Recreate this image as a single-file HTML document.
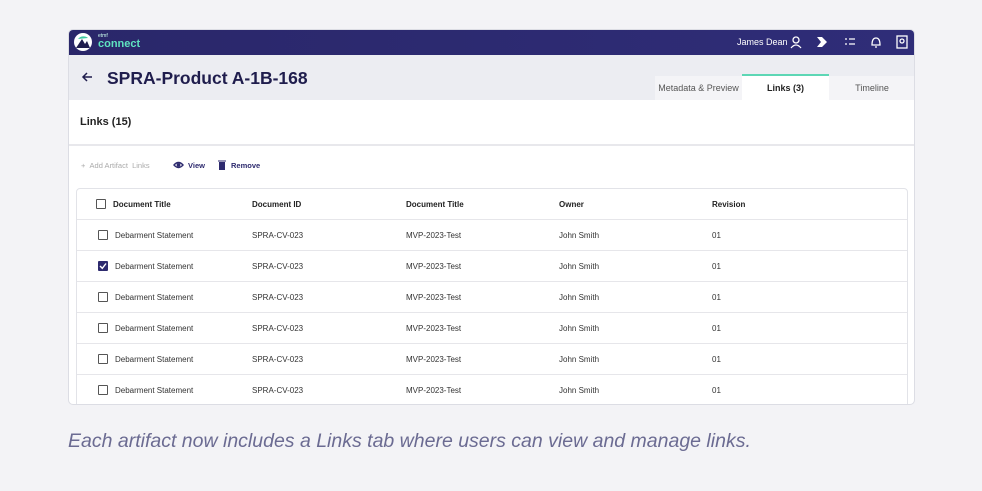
<!DOCTYPE html>
<html><head><style>
body{margin:0;width:982px;height:491px;background:#f3f3f6;font-family:"Liberation Sans",sans-serif;position:relative;overflow:hidden}
.card{position:absolute;left:68px;top:29px;width:845px;height:374px;background:#fff;border:1px solid #dcdde4;border-radius:5px;overflow:hidden}
.nav{position:absolute;left:0;top:0;width:846px;height:25px;background:linear-gradient(90deg,#2a276a,#2f2d78)}
.band{position:absolute;left:0;top:25px;width:846px;height:45px;background:#ecedf2}
.title{position:absolute;left:38px;top:38px;font-size:17.5px;font-weight:bold;color:#1f1d4d}
.tab{position:absolute;top:46px;height:24px;font-size:9px;color:#555;text-align:center;line-height:24px;background:#f4f4f7}
.t{position:absolute;font-size:8px;color:#333}
.h{font-weight:bold;color:#222}
.cb{position:absolute;width:8px;height:8px;border:1.3px solid #555;border-radius:1px}
.line{position:absolute;left:8px;width:830px;height:1px;background:#e6e6ea}
</style></head><body>
<div class="card">
<div class="nav">
<svg style="position:absolute;left:5px;top:3px" width="18" height="18"><circle cx="9" cy="9" r="9" fill="#fff"/><path d="M2 15 L8 6 L11 11 L13 8 L16 15Z" fill="#1f1d4d"/><path d="M4 6 A7 7 0 0 1 14 5" fill="#3fc9a0"/></svg>
<div style="position:absolute;left:29px;top:3px;font-size:5px;color:#cfe">etmf</div>
<div style="position:absolute;left:29px;top:8px;font-size:11px;color:#5fe3c0;font-weight:bold">connect</div>
<div style="position:absolute;left:668px;top:7px;font-size:9px;color:#fff">James Dean</div>
<svg style="position:absolute;left:720px;top:5px" width="14" height="14" fill="none" stroke="#fff" stroke-width="1.3"><circle cx="7" cy="5" r="3"/><path d="M2 13 Q7 7 12 13"/></svg>
<svg style="position:absolute;left:747px;top:6px" width="12" height="12" fill="#fff"><path d="M1 1 L6 1 L11 6 L6 11 L1 11 L5 6Z"/></svg>
<svg style="position:absolute;left:774px;top:6px" width="16" height="12" stroke="#fff" stroke-width="1.3"><path d="M2 3h2M6 3h6M2 8h2M6 8h6"/></svg>
<svg style="position:absolute;left:800px;top:5px" width="14" height="14" fill="none" stroke="#fff" stroke-width="1.3"><path d="M3 10 Q3 3 7 3 Q11 3 11 10Z M6 12h2"/></svg>
<svg style="position:absolute;left:826px;top:4px" width="14" height="16" fill="none" stroke="#fff" stroke-width="1.3"><rect x="2" y="2" width="10" height="12"/><circle cx="7" cy="7" r="2"/></svg>
</div>
<div class="band"></div>
<svg style="position:absolute;left:12px;top:41px" width="12" height="12" fill="none" stroke="#1f1d4d" stroke-width="1.5"><path d="M11 6H2M6 2L2 6L6 10"/></svg>
<div class="title">SPRA-Product A-1B-168</div>
<div class="tab" style="left:586px;width:87px">Metadata &amp; Preview</div>
<div class="tab" style="left:673px;width:87px;background:#fff;color:#222;font-weight:bold;border-top:2px solid #5dd7b5;top:44px">Links (3)</div>
<div class="tab" style="left:760px;width:86px">Timeline</div>
<div style="position:absolute;left:11px;top:86px;font-size:11px;font-weight:bold;color:#222">Links (15)</div>
<div style="position:absolute;left:0;top:114px;width:846px;height:2px;background:#e8e8ec"></div>
<div style="position:absolute;left:12px;top:131px;font-size:7.5px;color:#aaa">+&nbsp;&nbsp;Add Artifact&nbsp; Links</div>
<svg style="position:absolute;left:104px;top:131px" width="11" height="8" fill="none" stroke="#2d2a6e" stroke-width="1.4"><path d="M1 4 Q5.5 -1 10 4 Q5.5 9 1 4Z"/><circle cx="5.5" cy="4" r="1.2" fill="#2d2a6e"/></svg>
<div style="position:absolute;left:119px;top:131px;font-size:7.5px;color:#2d2a6e;font-weight:bold">View</div>
<svg style="position:absolute;left:149px;top:130px" width="8" height="10" fill="#2d2a6e"><rect x="1" y="2" width="6" height="8"/><rect x="0" y="0.5" width="8" height="1"/></svg>
<div style="position:absolute;left:162px;top:131px;font-size:7.5px;color:#2d2a6e;font-weight:bold">Remove</div>
<div style="position:absolute;left:7px;top:158px;width:830px;height:220px;border:1px solid #e2e3e8;border-radius:4px"></div>
<div class="cb" style="left:27px;top:169px"></div>
<div class="t h" style="left:44px;top:170px">Document Title</div>
<div class="t h" style="left:183px;top:170px">Document ID</div>
<div class="t h" style="left:337px;top:170px">Document Title</div>
<div class="t h" style="left:490px;top:170px">Owner</div>
<div class="t h" style="left:643px;top:170px">Revision</div>
<div class="line" style="top:189px"></div><div class="line" style="top:220px"></div><div class="line" style="top:251px"></div><div class="line" style="top:282px"></div><div class="line" style="top:313px"></div><div class="line" style="top:344px"></div>
<div id="rows"></div>
</div>
<div style="position:absolute;left:68px;top:430px;font-size:19.5px;font-style:italic;color:#6b6b92">Each artifact now includes a Links tab where users can view and manage links.</div>
<script>
var h='';for(var i=0;i<6;i++){var y=201+31*i;var c=i==1?'background:#2d2a6e;border-color:#2d2a6e':'';
h+='<div class="cb" style="left:29px;top:'+(y-1)+'px;'+c+'">'+(i==1?'<svg width="8" height="8" style="position:absolute;left:0;top:0" fill="none" stroke="#fff" stroke-width="1.4"><path d="M1 4L3.3 6.3L7 1.5"/></svg>':'')+'</div>';
h+='<div class="t" style="left:46px;top:'+y+'px">Debarment Statement</div><div class="t" style="left:183px;top:'+y+'px">SPRA-CV-023</div><div class="t" style="left:337px;top:'+y+'px">MVP-2023-Test</div><div class="t" style="left:490px;top:'+y+'px">John Smith</div><div class="t" style="left:643px;top:'+y+'px">01</div>';}
document.getElementById('rows').outerHTML=h;
</script>
</body></html>
